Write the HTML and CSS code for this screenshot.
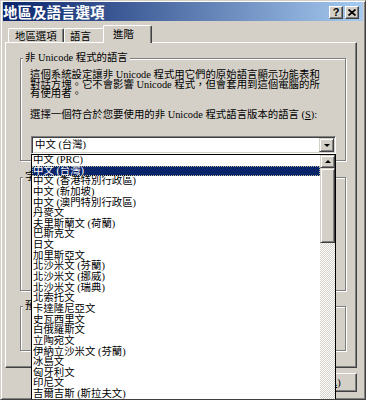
FILE: index.html
```html
<!DOCTYPE html>
<html lang="zh-Hant">
<head>
    <meta charset="UTF-8">
    <meta name="viewport" content="width=device-width, initial-scale=1.0">
    <title>地區及語言選項</title>
    <link rel="stylesheet" href="styles.css">
</head>
<body>
    <div class="window">
        <div class="titlebar">
            <span class="title">地區及語言選項</span>
            <div class="caption-buttons">
                <span class="cap-btn">?</span>
                <span class="cap-btn">
                    <svg width="8" height="7" viewBox="0 0 8 7"><path d="M0.5 0.5 L7.5 6.5 M7.5 0.5 L0.5 6.5" stroke="#000" stroke-width="1.7" fill="none"/></svg>
                </span>
            </div>
        </div>

        <div class="tabs">
            <div class="tab tab-region">地區選項</div>
            <div class="tab tab-lang">語言</div>
            <div class="tab tab-adv active">進階</div>
        </div>

        <div class="panel">
            <div class="group group-unicode">
                <span class="legend">非 Unicode 程式的語言</span>
                <p class="desc">這個系統設定讓非 Unicode 程式用它們的原始語言顯示功能表和<br>對話方塊。它不會影響 Unicode 程式，但會套用到這個電腦的所<br>有使用者。</p>
                <p class="prompt">選擇一個符合於您要使用的非 Unicode 程式語言版本的語言 (<u>S</u>):</p>
                <div class="combo">
                    <span class="combo-value">中文 (台灣)</span>
                    <span class="combo-btn"><span class="arrow-down"></span></span>
                </div>
            </div>
            <div class="group group-codepage">
                <span class="legend">字碼頁轉換表</span>
            </div>
            <div class="group group-default">
                <span class="legend">預設使用者帳戶設定</span>
            </div>
        </div>

        <div class="buttons">
            <button class="btn">確定</button>
            <button class="btn">取消</button>
            <button class="btn">套用(<u>A</u>)</button>
        </div>

        <!-- open combo list, drawn over the dialog -->
        <div class="dropdown">
            <ul class="options">
                <li>中文 (PRC)</li>
                <li class="selected">中文 (台灣)</li>
                <li>中文 (香港特別行政區)</li>
                <li>中文 (新加坡)</li>
                <li>中文 (澳門特別行政區)</li>
                <li>丹麥文</li>
                <li>夫里斯蘭文 (荷蘭)</li>
                <li>巴斯克文</li>
                <li>日文</li>
                <li>加里斯亞文</li>
                <li>北沙米文 (芬蘭)</li>
                <li>北沙米文 (挪威)</li>
                <li>北沙米文 (瑞典)</li>
                <li>北索托文</li>
                <li>卡達隆尼亞文</li>
                <li>史瓦西里文</li>
                <li>白俄羅斯文</li>
                <li>立陶宛文</li>
                <li>伊納立沙米文 (芬蘭)</li>
                <li>冰島文</li>
                <li>匈牙利文</li>
                <li>印尼文</li>
                <li>吉爾吉斯 (斯拉夫文)</li>
                <li>多明尼加文</li>
            </ul>
            <div class="scrollbar">
                <div class="sb-btn"><span class="arrow-up"></span></div>
                <div class="sb-thumb"></div>
                <div class="sb-track"></div>
            </div>
        </div>
    </div>
</body>
</html>
```

FILE: styles.css
```css
html, body {
    margin: 0;
    height: 400px;
    overflow: hidden;
    background-color: #d4d0c8;
}

.window {
    position: relative;
    width: 366px;
    height: 400px;
    box-sizing: border-box;
    padding: 1px 2px 2px 2px;
    background-color: #d4d0c8;
    border: 1px solid;
    border-color: #d4d0c8 #404040 #404040 #d4d0c8;
    box-shadow: inset 1px 1px #fff, inset -1px -1px #808080;
    font-family: "Liberation Serif", "Noto Sans CJK TC", serif;
    font-size: 10.4px;
    color: #000;
    overflow: hidden;
}

/* Title bar */
.titlebar {
    display: flex;
    align-items: center;
    height: 19px;
    padding-right: 4px;
    background: linear-gradient(90deg, #0a246a, #a6caf0);
}

.title {
    color: #fff;
    font-family: "Noto Sans CJK TC", sans-serif;
    font-weight: bold;
    font-size: 14.5px;
    line-height: 19px;
    white-space: nowrap;
}

.caption-buttons {
    display: flex;
    gap: 2px;
    margin-left: auto;
    margin-top: 2px;
}

.cap-btn {
    display: flex;
    align-items: center;
    justify-content: center;
    width: 14px;
    height: 13px;
    box-sizing: border-box;
    background-color: #d4d0c8;
    border: 1px solid;
    border-color: #fff #404040 #404040 #fff;
    box-shadow: inset -1px -1px #808080;
    font-family: "Liberation Sans", sans-serif;
    font-weight: bold;
    font-size: 11px;
    line-height: 11px;
}

/* Tabs */
.tabs {
    display: flex;
    align-items: flex-end;
    height: 17px;
    margin-top: 4px;
    padding-left: 5px;
}

.tab {
    height: 14px;
    box-sizing: border-box;
    padding-top: 3px;
    background-color: #d4d0c8;
    border-top: 1px solid #fff;
    border-left: 1px solid #fff;
    border-right: 1px solid #404040;
    box-shadow: inset -1px 0 #808080;
    border-radius: 2px 2px 0 0;
    line-height: 10px;
    white-space: nowrap;
}

.tab-region { width: 56px; padding-left: 6px; }
.tab-lang { width: 41px; padding-left: 5px; }

.tab.active {
    position: relative;
    z-index: 1;
    width: 49px;
    height: 18px;
    margin-left: -2px;
    margin-bottom: -1px;
    padding-top: 4px;
    padding-left: 9px;
}

/* Tab page */
.panel {
    width: 352px;
    height: 326px;
    box-sizing: border-box;
    margin-left: 2px;
    padding: 15px 0 0 14px;
    border: 1px solid;
    border-color: #fff #404040 #404040 #fff;
    box-shadow: inset -1px -1px #808080;
}

.group {
    width: 326px;
    box-sizing: border-box;
    padding: 0 9px;
    border: 1px solid #808080;
    box-shadow: inset 1px 1px #fff, 1px 1px #fff;
}

.group-unicode { height: 103px; }
.group-codepage { height: 114px; margin-top: 16px; }
.group-default { height: 45px; margin-top: 15px; }

.legend {
    display: block;
    width: fit-content;
    margin: -6px 0 0 -7px;
    padding: 0 2px;
    background-color: #d4d0c8;
    line-height: 10px;
    white-space: nowrap;
}

.desc {
    margin: 7px 0 0 0;
    line-height: 9.7px;
    white-space: nowrap;
}

.prompt {
    margin: 11px 0 0 0;
    line-height: 10px;
    white-space: nowrap;
}

.combo {
    display: flex;
    align-items: center;
    width: 305px;
    height: 18px;
    box-sizing: border-box;
    margin: 16px 0 0 1px;
    padding: 1px;
    background-color: #fff;
    border: 1px solid;
    border-color: #808080 #fff #fff #808080;
    box-shadow: inset 1px 1px #404040, inset -1px -1px #d4d0c8;
}

.combo-value {
    flex: 1;
    padding-left: 2px;
    line-height: 10px;
}

.combo-btn,
.sb-btn,
.sb-thumb {
    display: flex;
    align-items: center;
    justify-content: center;
    box-sizing: border-box;
    background-color: #d4d0c8;
    border: 1px solid;
    border-color: #d4d0c8 #404040 #404040 #d4d0c8;
    box-shadow: inset 1px 1px #fff, inset -1px -1px #808080;
}

.combo-btn {
    width: 15px;
    height: 14px;
}

.arrow-down {
    border-left: 3px solid transparent;
    border-right: 3px solid transparent;
    border-top: 3px solid #000;
}

.arrow-up {
    border-left: 3px solid transparent;
    border-right: 3px solid transparent;
    border-bottom: 3px solid #000;
}

/* Dialog buttons */
.buttons {
    display: flex;
    justify-content: flex-end;
    gap: 5px;
    margin-top: 5px;
    padding-right: 6px;
}

.btn {
    width: 68px;
    height: 19px;
    padding: 0;
    background-color: #d4d0c8;
    border: 1px solid;
    border-color: #fff #404040 #404040 #fff;
    box-shadow: inset -1px -1px #808080;
    font: inherit;
    line-height: 10px;
    color: #000;
}

/* Open drop-down list */
.dropdown {
    position: absolute;
    left: 30px;
    top: 153px;
    display: flex;
    width: 305px;
    height: 262px;
    box-sizing: border-box;
    background-color: #fff;
    border: 1px solid #000;
}

.options {
    flex: 1;
    margin: 0;
    padding: 0;
    list-style: none;
}

.options li {
    height: 10.65px;
    padding-left: 1px;
    line-height: 10.65px;
    white-space: nowrap;
}

.options li.selected {
    background-color: #0a246a;
    color: #fff;
    outline: 1px dotted #b8b89a;
    outline-offset: -1px;
}

.scrollbar {
    display: flex;
    flex-direction: column;
    width: 15px;
}

.sb-btn { height: 13px; }
.sb-thumb { height: 75px; }

.sb-track {
    flex: 1;
    background: repeating-conic-gradient(#fff 0 25%, #d4d0c8 0 50%) 0 0 / 2px 2px;
}
```
